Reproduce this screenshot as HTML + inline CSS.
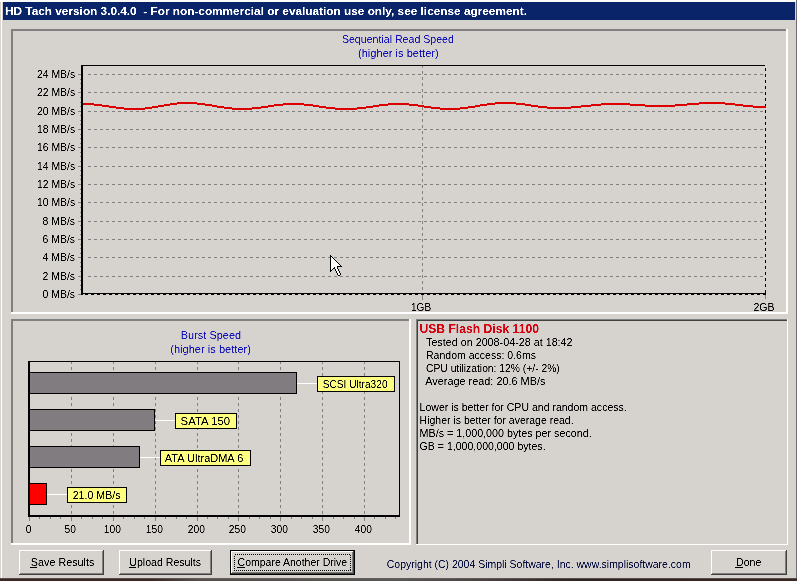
<!DOCTYPE html>
<html><head><meta charset="utf-8"><style>
html,body{margin:0;padding:0;width:797px;height:581px;overflow:hidden;background:#d6d3ce}
svg{display:block;will-change:transform}
text{font-family:"Liberation Sans",sans-serif;white-space:pre}
</style></head><body>
<svg width="797" height="581" viewBox="0 0 797 581" shape-rendering="crispEdges">
<defs><filter id="cr" filterUnits="userSpaceOnUse" x="0" y="0" width="797" height="581" color-interpolation-filters="sRGB"><feComponentTransfer><feFuncA type="linear" slope="2" intercept="-0.45"/></feComponentTransfer></filter></defs>
<rect x="0" y="0" width="797" height="581" fill="#d6d3ce"/>
<rect x="0" y="0" width="797" height="2" fill="#fbfbf8"/>
<rect x="1" y="1" width="1" height="578" fill="#ffffff"/>
<rect x="796" y="0" width="1" height="581" fill="#706c70"/>
<defs><linearGradient id="bt" x1="0" x2="1" y1="0" y2="0"><stop offset="0" stop-color="#3a2622"/><stop offset="0.19" stop-color="#3a2622"/><stop offset="0.25" stop-color="#55504e"/><stop offset="0.5" stop-color="#5a5654"/><stop offset="0.6" stop-color="#4a4442"/><stop offset="0.72" stop-color="#2e2422"/><stop offset="1" stop-color="#3a2622"/></linearGradient></defs>
<rect x="0" y="578" width="797" height="3" fill="url(#bt)"/>
<rect x="0" y="578" width="797" height="1" fill="rgba(110,104,104,0.6)"/>
<rect x="3" y="2" width="792" height="18" fill="#0a246a"/>
<rect x="11" y="29" width="777" height="2" fill="#808080"/>
<rect x="11" y="29" width="2" height="285" fill="#808080"/>
<rect x="11" y="312" width="777" height="2" fill="#ffffff"/>
<rect x="786" y="29" width="2" height="285" fill="#ffffff"/>
<rect x="11" y="319" width="400" height="2" fill="#808080"/>
<rect x="11" y="319" width="2" height="226" fill="#808080"/>
<rect x="11" y="543" width="400" height="2" fill="#ffffff"/>
<rect x="409" y="319" width="2" height="226" fill="#ffffff"/>
<rect x="416" y="319" width="372" height="226" fill="#d6d3ce"/>
<rect x="416" y="319" width="372" height="1" fill="#808080"/>
<rect x="416" y="319" width="1" height="226" fill="#808080"/>
<rect x="417" y="320" width="370" height="1" fill="#404040"/>
<rect x="417" y="320" width="1" height="224" fill="#404040"/>
<rect x="416" y="544" width="372" height="1" fill="#ffffff"/>
<rect x="787" y="319" width="1" height="226" fill="#ffffff"/>
<line x1="88" y1="74.5" x2="765" y2="74.5" stroke="#808080" stroke-width="1" stroke-dasharray="3 3" stroke-dashoffset="0"/>
<rect x="78" y="74" width="3" height="1" fill="#808080"/>
<line x1="88" y1="92.5" x2="765" y2="92.5" stroke="#808080" stroke-width="1" stroke-dasharray="3 3" stroke-dashoffset="0"/>
<rect x="78" y="92" width="3" height="1" fill="#808080"/>
<line x1="88" y1="111.5" x2="765" y2="111.5" stroke="#808080" stroke-width="1" stroke-dasharray="3 3" stroke-dashoffset="0"/>
<rect x="78" y="111" width="3" height="1" fill="#808080"/>
<line x1="88" y1="129.5" x2="765" y2="129.5" stroke="#808080" stroke-width="1" stroke-dasharray="3 3" stroke-dashoffset="0"/>
<rect x="78" y="129" width="3" height="1" fill="#808080"/>
<line x1="88" y1="147.5" x2="765" y2="147.5" stroke="#808080" stroke-width="1" stroke-dasharray="3 3" stroke-dashoffset="0"/>
<rect x="78" y="147" width="3" height="1" fill="#808080"/>
<line x1="88" y1="166.5" x2="765" y2="166.5" stroke="#808080" stroke-width="1" stroke-dasharray="3 3" stroke-dashoffset="0"/>
<rect x="78" y="166" width="3" height="1" fill="#808080"/>
<line x1="88" y1="184.5" x2="765" y2="184.5" stroke="#808080" stroke-width="1" stroke-dasharray="3 3" stroke-dashoffset="0"/>
<rect x="78" y="184" width="3" height="1" fill="#808080"/>
<line x1="88" y1="202.5" x2="765" y2="202.5" stroke="#808080" stroke-width="1" stroke-dasharray="3 3" stroke-dashoffset="0"/>
<rect x="78" y="202" width="3" height="1" fill="#808080"/>
<line x1="88" y1="221.5" x2="765" y2="221.5" stroke="#808080" stroke-width="1" stroke-dasharray="3 3" stroke-dashoffset="0"/>
<rect x="78" y="221" width="3" height="1" fill="#808080"/>
<line x1="88" y1="239.5" x2="765" y2="239.5" stroke="#808080" stroke-width="1" stroke-dasharray="3 3" stroke-dashoffset="0"/>
<rect x="78" y="239" width="3" height="1" fill="#808080"/>
<line x1="88" y1="257.5" x2="765" y2="257.5" stroke="#808080" stroke-width="1" stroke-dasharray="3 3" stroke-dashoffset="0"/>
<rect x="78" y="257" width="3" height="1" fill="#808080"/>
<line x1="88" y1="276.5" x2="765" y2="276.5" stroke="#808080" stroke-width="1" stroke-dasharray="3 3" stroke-dashoffset="0"/>
<rect x="78" y="276" width="3" height="1" fill="#808080"/>
<rect x="78" y="294" width="3" height="1" fill="#808080"/>
<rect x="80" y="74" width="1" height="1" fill="#808080"/>
<rect x="80" y="79" width="1" height="1" fill="#808080"/>
<rect x="80" y="83" width="1" height="1" fill="#808080"/>
<rect x="80" y="88" width="1" height="1" fill="#808080"/>
<rect x="80" y="92" width="1" height="1" fill="#808080"/>
<rect x="80" y="97" width="1" height="1" fill="#808080"/>
<rect x="80" y="102" width="1" height="1" fill="#808080"/>
<rect x="80" y="106" width="1" height="1" fill="#808080"/>
<rect x="80" y="111" width="1" height="1" fill="#808080"/>
<rect x="80" y="115" width="1" height="1" fill="#808080"/>
<rect x="80" y="120" width="1" height="1" fill="#808080"/>
<rect x="80" y="124" width="1" height="1" fill="#808080"/>
<rect x="80" y="129" width="1" height="1" fill="#808080"/>
<rect x="80" y="134" width="1" height="1" fill="#808080"/>
<rect x="80" y="138" width="1" height="1" fill="#808080"/>
<rect x="80" y="143" width="1" height="1" fill="#808080"/>
<rect x="80" y="147" width="1" height="1" fill="#808080"/>
<rect x="80" y="152" width="1" height="1" fill="#808080"/>
<rect x="80" y="156" width="1" height="1" fill="#808080"/>
<rect x="80" y="161" width="1" height="1" fill="#808080"/>
<rect x="80" y="166" width="1" height="1" fill="#808080"/>
<rect x="80" y="170" width="1" height="1" fill="#808080"/>
<rect x="80" y="175" width="1" height="1" fill="#808080"/>
<rect x="80" y="179" width="1" height="1" fill="#808080"/>
<rect x="80" y="184" width="1" height="1" fill="#808080"/>
<rect x="80" y="189" width="1" height="1" fill="#808080"/>
<rect x="80" y="193" width="1" height="1" fill="#808080"/>
<rect x="80" y="198" width="1" height="1" fill="#808080"/>
<rect x="80" y="202" width="1" height="1" fill="#808080"/>
<rect x="80" y="207" width="1" height="1" fill="#808080"/>
<rect x="80" y="212" width="1" height="1" fill="#808080"/>
<rect x="80" y="216" width="1" height="1" fill="#808080"/>
<rect x="80" y="221" width="1" height="1" fill="#808080"/>
<rect x="80" y="225" width="1" height="1" fill="#808080"/>
<rect x="80" y="230" width="1" height="1" fill="#808080"/>
<rect x="80" y="234" width="1" height="1" fill="#808080"/>
<rect x="80" y="239" width="1" height="1" fill="#808080"/>
<rect x="80" y="244" width="1" height="1" fill="#808080"/>
<rect x="80" y="248" width="1" height="1" fill="#808080"/>
<rect x="80" y="253" width="1" height="1" fill="#808080"/>
<rect x="80" y="257" width="1" height="1" fill="#808080"/>
<rect x="80" y="262" width="1" height="1" fill="#808080"/>
<rect x="80" y="266" width="1" height="1" fill="#808080"/>
<rect x="80" y="271" width="1" height="1" fill="#808080"/>
<rect x="80" y="276" width="1" height="1" fill="#808080"/>
<rect x="80" y="280" width="1" height="1" fill="#808080"/>
<rect x="80" y="285" width="1" height="1" fill="#808080"/>
<rect x="80" y="289" width="1" height="1" fill="#808080"/>
<rect x="80" y="294" width="1" height="1" fill="#808080"/>
<line x1="422.5" y1="65" x2="422.5" y2="293" stroke="#808080" stroke-width="1" stroke-dasharray="3 3" stroke-dashoffset="0"/>
<rect x="422" y="294" width="1" height="6" fill="#808080"/>
<rect x="765" y="295" width="1" height="4" fill="#808080"/>
<rect x="81" y="65" width="684" height="1" fill="#000"/>
<rect x="81" y="65" width="2" height="230" fill="#000"/>
<rect x="81" y="293" width="685" height="1" fill="#000"/>
<rect x="85" y="294" width="3" height="1" fill="#000"/>
<rect x="91" y="294" width="3" height="1" fill="#000"/>
<rect x="97" y="294" width="3" height="1" fill="#000"/>
<rect x="103" y="294" width="3" height="1" fill="#000"/>
<rect x="109" y="294" width="3" height="1" fill="#000"/>
<rect x="115" y="294" width="3" height="1" fill="#000"/>
<rect x="121" y="294" width="3" height="1" fill="#000"/>
<rect x="127" y="294" width="3" height="1" fill="#000"/>
<rect x="133" y="294" width="3" height="1" fill="#000"/>
<rect x="139" y="294" width="3" height="1" fill="#000"/>
<rect x="145" y="294" width="3" height="1" fill="#000"/>
<rect x="151" y="294" width="3" height="1" fill="#000"/>
<rect x="157" y="294" width="3" height="1" fill="#000"/>
<rect x="163" y="294" width="3" height="1" fill="#000"/>
<rect x="169" y="294" width="3" height="1" fill="#000"/>
<rect x="175" y="294" width="3" height="1" fill="#000"/>
<rect x="181" y="294" width="3" height="1" fill="#000"/>
<rect x="187" y="294" width="3" height="1" fill="#000"/>
<rect x="193" y="294" width="3" height="1" fill="#000"/>
<rect x="199" y="294" width="3" height="1" fill="#000"/>
<rect x="205" y="294" width="3" height="1" fill="#000"/>
<rect x="211" y="294" width="3" height="1" fill="#000"/>
<rect x="217" y="294" width="3" height="1" fill="#000"/>
<rect x="223" y="294" width="3" height="1" fill="#000"/>
<rect x="229" y="294" width="3" height="1" fill="#000"/>
<rect x="235" y="294" width="3" height="1" fill="#000"/>
<rect x="241" y="294" width="3" height="1" fill="#000"/>
<rect x="247" y="294" width="3" height="1" fill="#000"/>
<rect x="253" y="294" width="3" height="1" fill="#000"/>
<rect x="259" y="294" width="3" height="1" fill="#000"/>
<rect x="265" y="294" width="3" height="1" fill="#000"/>
<rect x="271" y="294" width="3" height="1" fill="#000"/>
<rect x="277" y="294" width="3" height="1" fill="#000"/>
<rect x="283" y="294" width="3" height="1" fill="#000"/>
<rect x="289" y="294" width="3" height="1" fill="#000"/>
<rect x="295" y="294" width="3" height="1" fill="#000"/>
<rect x="301" y="294" width="3" height="1" fill="#000"/>
<rect x="307" y="294" width="3" height="1" fill="#000"/>
<rect x="313" y="294" width="3" height="1" fill="#000"/>
<rect x="319" y="294" width="3" height="1" fill="#000"/>
<rect x="325" y="294" width="3" height="1" fill="#000"/>
<rect x="331" y="294" width="3" height="1" fill="#000"/>
<rect x="337" y="294" width="3" height="1" fill="#000"/>
<rect x="343" y="294" width="3" height="1" fill="#000"/>
<rect x="349" y="294" width="3" height="1" fill="#000"/>
<rect x="355" y="294" width="3" height="1" fill="#000"/>
<rect x="361" y="294" width="3" height="1" fill="#000"/>
<rect x="367" y="294" width="3" height="1" fill="#000"/>
<rect x="373" y="294" width="3" height="1" fill="#000"/>
<rect x="379" y="294" width="3" height="1" fill="#000"/>
<rect x="385" y="294" width="3" height="1" fill="#000"/>
<rect x="391" y="294" width="3" height="1" fill="#000"/>
<rect x="397" y="294" width="3" height="1" fill="#000"/>
<rect x="403" y="294" width="3" height="1" fill="#000"/>
<rect x="409" y="294" width="3" height="1" fill="#000"/>
<rect x="415" y="294" width="3" height="1" fill="#000"/>
<rect x="421" y="294" width="3" height="1" fill="#000"/>
<rect x="427" y="294" width="3" height="1" fill="#000"/>
<rect x="433" y="294" width="3" height="1" fill="#000"/>
<rect x="439" y="294" width="3" height="1" fill="#000"/>
<rect x="445" y="294" width="3" height="1" fill="#000"/>
<rect x="451" y="294" width="3" height="1" fill="#000"/>
<rect x="457" y="294" width="3" height="1" fill="#000"/>
<rect x="463" y="294" width="3" height="1" fill="#000"/>
<rect x="469" y="294" width="3" height="1" fill="#000"/>
<rect x="475" y="294" width="3" height="1" fill="#000"/>
<rect x="481" y="294" width="3" height="1" fill="#000"/>
<rect x="487" y="294" width="3" height="1" fill="#000"/>
<rect x="493" y="294" width="3" height="1" fill="#000"/>
<rect x="499" y="294" width="3" height="1" fill="#000"/>
<rect x="505" y="294" width="3" height="1" fill="#000"/>
<rect x="511" y="294" width="3" height="1" fill="#000"/>
<rect x="517" y="294" width="3" height="1" fill="#000"/>
<rect x="523" y="294" width="3" height="1" fill="#000"/>
<rect x="529" y="294" width="3" height="1" fill="#000"/>
<rect x="535" y="294" width="3" height="1" fill="#000"/>
<rect x="541" y="294" width="3" height="1" fill="#000"/>
<rect x="547" y="294" width="3" height="1" fill="#000"/>
<rect x="553" y="294" width="3" height="1" fill="#000"/>
<rect x="559" y="294" width="3" height="1" fill="#000"/>
<rect x="565" y="294" width="3" height="1" fill="#000"/>
<rect x="571" y="294" width="3" height="1" fill="#000"/>
<rect x="577" y="294" width="3" height="1" fill="#000"/>
<rect x="583" y="294" width="3" height="1" fill="#000"/>
<rect x="589" y="294" width="3" height="1" fill="#000"/>
<rect x="595" y="294" width="3" height="1" fill="#000"/>
<rect x="601" y="294" width="3" height="1" fill="#000"/>
<rect x="607" y="294" width="3" height="1" fill="#000"/>
<rect x="613" y="294" width="3" height="1" fill="#000"/>
<rect x="619" y="294" width="3" height="1" fill="#000"/>
<rect x="625" y="294" width="3" height="1" fill="#000"/>
<rect x="631" y="294" width="3" height="1" fill="#000"/>
<rect x="637" y="294" width="3" height="1" fill="#000"/>
<rect x="643" y="294" width="3" height="1" fill="#000"/>
<rect x="649" y="294" width="3" height="1" fill="#000"/>
<rect x="655" y="294" width="3" height="1" fill="#000"/>
<rect x="661" y="294" width="3" height="1" fill="#000"/>
<rect x="667" y="294" width="3" height="1" fill="#000"/>
<rect x="673" y="294" width="3" height="1" fill="#000"/>
<rect x="679" y="294" width="3" height="1" fill="#000"/>
<rect x="685" y="294" width="3" height="1" fill="#000"/>
<rect x="691" y="294" width="3" height="1" fill="#000"/>
<rect x="697" y="294" width="3" height="1" fill="#000"/>
<rect x="703" y="294" width="3" height="1" fill="#000"/>
<rect x="709" y="294" width="3" height="1" fill="#000"/>
<rect x="715" y="294" width="3" height="1" fill="#000"/>
<rect x="721" y="294" width="3" height="1" fill="#000"/>
<rect x="727" y="294" width="3" height="1" fill="#000"/>
<rect x="733" y="294" width="3" height="1" fill="#000"/>
<rect x="739" y="294" width="3" height="1" fill="#000"/>
<rect x="745" y="294" width="3" height="1" fill="#000"/>
<rect x="751" y="294" width="3" height="1" fill="#000"/>
<rect x="757" y="294" width="3" height="1" fill="#000"/>
<rect x="763" y="294" width="3" height="1" fill="#000"/>
<rect x="765" y="68" width="1" height="3" fill="#000"/>
<rect x="765" y="74" width="1" height="3" fill="#000"/>
<rect x="765" y="80" width="1" height="3" fill="#000"/>
<rect x="765" y="86" width="1" height="3" fill="#000"/>
<rect x="765" y="92" width="1" height="3" fill="#000"/>
<rect x="765" y="98" width="1" height="3" fill="#000"/>
<rect x="765" y="104" width="1" height="3" fill="#000"/>
<rect x="765" y="110" width="1" height="3" fill="#000"/>
<rect x="765" y="116" width="1" height="3" fill="#000"/>
<rect x="765" y="122" width="1" height="3" fill="#000"/>
<rect x="765" y="128" width="1" height="3" fill="#000"/>
<rect x="765" y="134" width="1" height="3" fill="#000"/>
<rect x="765" y="140" width="1" height="3" fill="#000"/>
<rect x="765" y="146" width="1" height="3" fill="#000"/>
<rect x="765" y="152" width="1" height="3" fill="#000"/>
<rect x="765" y="158" width="1" height="3" fill="#000"/>
<rect x="765" y="164" width="1" height="3" fill="#000"/>
<rect x="765" y="170" width="1" height="3" fill="#000"/>
<rect x="765" y="176" width="1" height="3" fill="#000"/>
<rect x="765" y="182" width="1" height="3" fill="#000"/>
<rect x="765" y="188" width="1" height="3" fill="#000"/>
<rect x="765" y="194" width="1" height="3" fill="#000"/>
<rect x="765" y="200" width="1" height="3" fill="#000"/>
<rect x="765" y="206" width="1" height="3" fill="#000"/>
<rect x="765" y="212" width="1" height="3" fill="#000"/>
<rect x="765" y="218" width="1" height="3" fill="#000"/>
<rect x="765" y="224" width="1" height="3" fill="#000"/>
<rect x="765" y="230" width="1" height="3" fill="#000"/>
<rect x="765" y="236" width="1" height="3" fill="#000"/>
<rect x="765" y="242" width="1" height="3" fill="#000"/>
<rect x="765" y="248" width="1" height="3" fill="#000"/>
<rect x="765" y="254" width="1" height="3" fill="#000"/>
<rect x="765" y="260" width="1" height="3" fill="#000"/>
<rect x="765" y="266" width="1" height="3" fill="#000"/>
<rect x="765" y="272" width="1" height="3" fill="#000"/>
<rect x="765" y="278" width="1" height="3" fill="#000"/>
<rect x="765" y="284" width="1" height="3" fill="#000"/>
<rect x="765" y="290" width="1" height="3" fill="#000"/>
<rect x="83" y="103" width="11" height="2" fill="#dd0000"/>
<rect x="94" y="104" width="8" height="2" fill="#dd0000"/>
<rect x="102" y="105" width="7" height="2" fill="#dd0000"/>
<rect x="109" y="106" width="7" height="2" fill="#dd0000"/>
<rect x="116" y="107" width="8" height="2" fill="#dd0000"/>
<rect x="124" y="108" width="21" height="2" fill="#dd0000"/>
<rect x="145" y="107" width="7" height="2" fill="#dd0000"/>
<rect x="152" y="106" width="6" height="2" fill="#dd0000"/>
<rect x="158" y="105" width="6" height="2" fill="#dd0000"/>
<rect x="164" y="104" width="6" height="2" fill="#dd0000"/>
<rect x="170" y="103" width="7" height="2" fill="#dd0000"/>
<rect x="177" y="102" width="20" height="2" fill="#dd0000"/>
<rect x="197" y="103" width="8" height="2" fill="#dd0000"/>
<rect x="205" y="104" width="7" height="2" fill="#dd0000"/>
<rect x="212" y="105" width="5" height="2" fill="#dd0000"/>
<rect x="217" y="106" width="7" height="2" fill="#dd0000"/>
<rect x="224" y="107" width="8" height="2" fill="#dd0000"/>
<rect x="232" y="108" width="20" height="2" fill="#dd0000"/>
<rect x="252" y="107" width="9" height="2" fill="#dd0000"/>
<rect x="261" y="106" width="7" height="2" fill="#dd0000"/>
<rect x="268" y="105" width="6" height="2" fill="#dd0000"/>
<rect x="274" y="104" width="9" height="2" fill="#dd0000"/>
<rect x="283" y="103" width="21" height="2" fill="#dd0000"/>
<rect x="304" y="104" width="9" height="2" fill="#dd0000"/>
<rect x="313" y="105" width="6" height="2" fill="#dd0000"/>
<rect x="319" y="106" width="7" height="2" fill="#dd0000"/>
<rect x="326" y="107" width="9" height="2" fill="#dd0000"/>
<rect x="335" y="108" width="22" height="2" fill="#dd0000"/>
<rect x="357" y="107" width="9" height="2" fill="#dd0000"/>
<rect x="366" y="106" width="7" height="2" fill="#dd0000"/>
<rect x="373" y="105" width="6" height="2" fill="#dd0000"/>
<rect x="379" y="104" width="9" height="2" fill="#dd0000"/>
<rect x="388" y="103" width="21" height="2" fill="#dd0000"/>
<rect x="409" y="104" width="9" height="2" fill="#dd0000"/>
<rect x="418" y="105" width="6" height="2" fill="#dd0000"/>
<rect x="424" y="106" width="7" height="2" fill="#dd0000"/>
<rect x="431" y="107" width="9" height="2" fill="#dd0000"/>
<rect x="440" y="108" width="20" height="2" fill="#dd0000"/>
<rect x="460" y="107" width="8" height="2" fill="#dd0000"/>
<rect x="468" y="106" width="7" height="2" fill="#dd0000"/>
<rect x="475" y="105" width="5" height="2" fill="#dd0000"/>
<rect x="480" y="104" width="7" height="2" fill="#dd0000"/>
<rect x="487" y="103" width="8" height="2" fill="#dd0000"/>
<rect x="495" y="102" width="21" height="2" fill="#dd0000"/>
<rect x="516" y="103" width="9" height="2" fill="#dd0000"/>
<rect x="525" y="104" width="6" height="2" fill="#dd0000"/>
<rect x="531" y="105" width="7" height="2" fill="#dd0000"/>
<rect x="538" y="106" width="9" height="2" fill="#dd0000"/>
<rect x="547" y="107" width="24" height="2" fill="#dd0000"/>
<rect x="571" y="106" width="10" height="2" fill="#dd0000"/>
<rect x="581" y="105" width="10" height="2" fill="#dd0000"/>
<rect x="591" y="104" width="10" height="2" fill="#dd0000"/>
<rect x="601" y="103" width="29" height="2" fill="#dd0000"/>
<rect x="630" y="104" width="15" height="2" fill="#dd0000"/>
<rect x="645" y="105" width="30" height="2" fill="#dd0000"/>
<rect x="675" y="104" width="12" height="2" fill="#dd0000"/>
<rect x="687" y="103" width="12" height="2" fill="#dd0000"/>
<rect x="699" y="102" width="26" height="2" fill="#dd0000"/>
<rect x="725" y="103" width="10" height="2" fill="#dd0000"/>
<rect x="735" y="104" width="8" height="2" fill="#dd0000"/>
<rect x="743" y="105" width="10" height="2" fill="#dd0000"/>
<rect x="753" y="106" width="13" height="2" fill="#dd0000"/>
<rect x="330" y="255" width="1" height="1" fill="#000"/>
<rect x="330" y="256" width="1" height="1" fill="#000"/>
<rect x="331" y="256" width="1" height="1" fill="#000"/>
<rect x="330" y="257" width="1" height="1" fill="#000"/>
<rect x="331" y="257" width="1" height="1" fill="#fff"/>
<rect x="332" y="257" width="1" height="1" fill="#000"/>
<rect x="330" y="258" width="1" height="1" fill="#000"/>
<rect x="331" y="258" width="1" height="1" fill="#fff"/>
<rect x="332" y="258" width="1" height="1" fill="#fff"/>
<rect x="333" y="258" width="1" height="1" fill="#000"/>
<rect x="330" y="259" width="1" height="1" fill="#000"/>
<rect x="331" y="259" width="1" height="1" fill="#fff"/>
<rect x="332" y="259" width="1" height="1" fill="#fff"/>
<rect x="333" y="259" width="1" height="1" fill="#fff"/>
<rect x="334" y="259" width="1" height="1" fill="#000"/>
<rect x="330" y="260" width="1" height="1" fill="#000"/>
<rect x="331" y="260" width="1" height="1" fill="#fff"/>
<rect x="332" y="260" width="1" height="1" fill="#fff"/>
<rect x="333" y="260" width="1" height="1" fill="#fff"/>
<rect x="334" y="260" width="1" height="1" fill="#fff"/>
<rect x="335" y="260" width="1" height="1" fill="#000"/>
<rect x="330" y="261" width="1" height="1" fill="#000"/>
<rect x="331" y="261" width="1" height="1" fill="#fff"/>
<rect x="332" y="261" width="1" height="1" fill="#fff"/>
<rect x="333" y="261" width="1" height="1" fill="#fff"/>
<rect x="334" y="261" width="1" height="1" fill="#fff"/>
<rect x="335" y="261" width="1" height="1" fill="#fff"/>
<rect x="336" y="261" width="1" height="1" fill="#000"/>
<rect x="330" y="262" width="1" height="1" fill="#000"/>
<rect x="331" y="262" width="1" height="1" fill="#fff"/>
<rect x="332" y="262" width="1" height="1" fill="#fff"/>
<rect x="333" y="262" width="1" height="1" fill="#fff"/>
<rect x="334" y="262" width="1" height="1" fill="#fff"/>
<rect x="335" y="262" width="1" height="1" fill="#fff"/>
<rect x="336" y="262" width="1" height="1" fill="#fff"/>
<rect x="337" y="262" width="1" height="1" fill="#000"/>
<rect x="330" y="263" width="1" height="1" fill="#000"/>
<rect x="331" y="263" width="1" height="1" fill="#fff"/>
<rect x="332" y="263" width="1" height="1" fill="#fff"/>
<rect x="333" y="263" width="1" height="1" fill="#fff"/>
<rect x="334" y="263" width="1" height="1" fill="#fff"/>
<rect x="335" y="263" width="1" height="1" fill="#fff"/>
<rect x="336" y="263" width="1" height="1" fill="#fff"/>
<rect x="337" y="263" width="1" height="1" fill="#fff"/>
<rect x="338" y="263" width="1" height="1" fill="#000"/>
<rect x="330" y="264" width="1" height="1" fill="#000"/>
<rect x="331" y="264" width="1" height="1" fill="#fff"/>
<rect x="332" y="264" width="1" height="1" fill="#fff"/>
<rect x="333" y="264" width="1" height="1" fill="#fff"/>
<rect x="334" y="264" width="1" height="1" fill="#fff"/>
<rect x="335" y="264" width="1" height="1" fill="#fff"/>
<rect x="336" y="264" width="1" height="1" fill="#fff"/>
<rect x="337" y="264" width="1" height="1" fill="#fff"/>
<rect x="338" y="264" width="1" height="1" fill="#fff"/>
<rect x="339" y="264" width="1" height="1" fill="#000"/>
<rect x="330" y="265" width="1" height="1" fill="#000"/>
<rect x="331" y="265" width="1" height="1" fill="#fff"/>
<rect x="332" y="265" width="1" height="1" fill="#fff"/>
<rect x="333" y="265" width="1" height="1" fill="#fff"/>
<rect x="334" y="265" width="1" height="1" fill="#fff"/>
<rect x="335" y="265" width="1" height="1" fill="#fff"/>
<rect x="336" y="265" width="1" height="1" fill="#fff"/>
<rect x="337" y="265" width="1" height="1" fill="#fff"/>
<rect x="338" y="265" width="1" height="1" fill="#fff"/>
<rect x="339" y="265" width="1" height="1" fill="#fff"/>
<rect x="340" y="265" width="1" height="1" fill="#000"/>
<rect x="330" y="266" width="1" height="1" fill="#000"/>
<rect x="331" y="266" width="1" height="1" fill="#fff"/>
<rect x="332" y="266" width="1" height="1" fill="#fff"/>
<rect x="333" y="266" width="1" height="1" fill="#fff"/>
<rect x="334" y="266" width="1" height="1" fill="#fff"/>
<rect x="335" y="266" width="1" height="1" fill="#fff"/>
<rect x="336" y="266" width="1" height="1" fill="#fff"/>
<rect x="337" y="266" width="1" height="1" fill="#000"/>
<rect x="338" y="266" width="1" height="1" fill="#000"/>
<rect x="339" y="266" width="1" height="1" fill="#000"/>
<rect x="340" y="266" width="1" height="1" fill="#000"/>
<rect x="341" y="266" width="1" height="1" fill="#000"/>
<rect x="330" y="267" width="1" height="1" fill="#000"/>
<rect x="331" y="267" width="1" height="1" fill="#fff"/>
<rect x="332" y="267" width="1" height="1" fill="#fff"/>
<rect x="333" y="267" width="1" height="1" fill="#fff"/>
<rect x="334" y="267" width="1" height="1" fill="#000"/>
<rect x="335" y="267" width="1" height="1" fill="#fff"/>
<rect x="336" y="267" width="1" height="1" fill="#fff"/>
<rect x="337" y="267" width="1" height="1" fill="#000"/>
<rect x="330" y="268" width="1" height="1" fill="#000"/>
<rect x="331" y="268" width="1" height="1" fill="#fff"/>
<rect x="332" y="268" width="1" height="1" fill="#fff"/>
<rect x="333" y="268" width="1" height="1" fill="#000"/>
<rect x="334" y="268" width="1" height="1" fill="#000"/>
<rect x="335" y="268" width="1" height="1" fill="#fff"/>
<rect x="336" y="268" width="1" height="1" fill="#fff"/>
<rect x="337" y="268" width="1" height="1" fill="#000"/>
<rect x="330" y="269" width="1" height="1" fill="#000"/>
<rect x="331" y="269" width="1" height="1" fill="#fff"/>
<rect x="332" y="269" width="1" height="1" fill="#000"/>
<rect x="335" y="269" width="1" height="1" fill="#000"/>
<rect x="336" y="269" width="1" height="1" fill="#fff"/>
<rect x="337" y="269" width="1" height="1" fill="#fff"/>
<rect x="338" y="269" width="1" height="1" fill="#000"/>
<rect x="330" y="270" width="1" height="1" fill="#000"/>
<rect x="331" y="270" width="1" height="1" fill="#000"/>
<rect x="335" y="270" width="1" height="1" fill="#000"/>
<rect x="336" y="270" width="1" height="1" fill="#fff"/>
<rect x="337" y="270" width="1" height="1" fill="#fff"/>
<rect x="338" y="270" width="1" height="1" fill="#000"/>
<rect x="330" y="271" width="1" height="1" fill="#000"/>
<rect x="336" y="271" width="1" height="1" fill="#000"/>
<rect x="337" y="271" width="1" height="1" fill="#fff"/>
<rect x="338" y="271" width="1" height="1" fill="#fff"/>
<rect x="339" y="271" width="1" height="1" fill="#000"/>
<rect x="336" y="272" width="1" height="1" fill="#000"/>
<rect x="337" y="272" width="1" height="1" fill="#fff"/>
<rect x="338" y="272" width="1" height="1" fill="#fff"/>
<rect x="339" y="272" width="1" height="1" fill="#000"/>
<rect x="337" y="273" width="1" height="1" fill="#000"/>
<rect x="338" y="273" width="1" height="1" fill="#fff"/>
<rect x="339" y="273" width="1" height="1" fill="#fff"/>
<rect x="340" y="273" width="1" height="1" fill="#000"/>
<rect x="337" y="274" width="1" height="1" fill="#000"/>
<rect x="338" y="274" width="1" height="1" fill="#fff"/>
<rect x="339" y="274" width="1" height="1" fill="#fff"/>
<rect x="340" y="274" width="1" height="1" fill="#000"/>
<rect x="338" y="275" width="1" height="1" fill="#000"/>
<rect x="339" y="275" width="1" height="1" fill="#000"/>
<line x1="71.5" y1="361" x2="71.5" y2="515" stroke="#808080" stroke-width="1" stroke-dasharray="3 3" stroke-dashoffset="0"/>
<line x1="113.5" y1="361" x2="113.5" y2="515" stroke="#808080" stroke-width="1" stroke-dasharray="3 3" stroke-dashoffset="0"/>
<line x1="155.5" y1="361" x2="155.5" y2="515" stroke="#808080" stroke-width="1" stroke-dasharray="3 3" stroke-dashoffset="0"/>
<line x1="197.5" y1="361" x2="197.5" y2="515" stroke="#808080" stroke-width="1" stroke-dasharray="3 3" stroke-dashoffset="0"/>
<line x1="238.5" y1="361" x2="238.5" y2="515" stroke="#808080" stroke-width="1" stroke-dasharray="3 3" stroke-dashoffset="0"/>
<line x1="280.5" y1="361" x2="280.5" y2="515" stroke="#808080" stroke-width="1" stroke-dasharray="3 3" stroke-dashoffset="0"/>
<line x1="322.5" y1="361" x2="322.5" y2="515" stroke="#808080" stroke-width="1" stroke-dasharray="3 3" stroke-dashoffset="0"/>
<line x1="364.5" y1="361" x2="364.5" y2="515" stroke="#808080" stroke-width="1" stroke-dasharray="3 3" stroke-dashoffset="0"/>
<rect x="29" y="517" width="1" height="4" fill="#808080"/>
<rect x="71" y="517" width="1" height="4" fill="#808080"/>
<rect x="113" y="517" width="1" height="4" fill="#808080"/>
<rect x="155" y="517" width="1" height="4" fill="#808080"/>
<rect x="197" y="517" width="1" height="4" fill="#808080"/>
<rect x="238" y="517" width="1" height="4" fill="#808080"/>
<rect x="280" y="517" width="1" height="4" fill="#808080"/>
<rect x="322" y="517" width="1" height="4" fill="#808080"/>
<rect x="364" y="517" width="1" height="4" fill="#808080"/>
<rect x="29" y="517" width="1" height="2" fill="#808080"/>
<rect x="39" y="517" width="1" height="2" fill="#808080"/>
<rect x="50" y="517" width="1" height="2" fill="#808080"/>
<rect x="60" y="517" width="1" height="2" fill="#808080"/>
<rect x="71" y="517" width="1" height="2" fill="#808080"/>
<rect x="81" y="517" width="1" height="2" fill="#808080"/>
<rect x="92" y="517" width="1" height="2" fill="#808080"/>
<rect x="102" y="517" width="1" height="2" fill="#808080"/>
<rect x="113" y="517" width="1" height="2" fill="#808080"/>
<rect x="123" y="517" width="1" height="2" fill="#808080"/>
<rect x="134" y="517" width="1" height="2" fill="#808080"/>
<rect x="144" y="517" width="1" height="2" fill="#808080"/>
<rect x="155" y="517" width="1" height="2" fill="#808080"/>
<rect x="165" y="517" width="1" height="2" fill="#808080"/>
<rect x="176" y="517" width="1" height="2" fill="#808080"/>
<rect x="186" y="517" width="1" height="2" fill="#808080"/>
<rect x="197" y="517" width="1" height="2" fill="#808080"/>
<rect x="207" y="517" width="1" height="2" fill="#808080"/>
<rect x="217" y="517" width="1" height="2" fill="#808080"/>
<rect x="228" y="517" width="1" height="2" fill="#808080"/>
<rect x="238" y="517" width="1" height="2" fill="#808080"/>
<rect x="249" y="517" width="1" height="2" fill="#808080"/>
<rect x="259" y="517" width="1" height="2" fill="#808080"/>
<rect x="270" y="517" width="1" height="2" fill="#808080"/>
<rect x="280" y="517" width="1" height="2" fill="#808080"/>
<rect x="291" y="517" width="1" height="2" fill="#808080"/>
<rect x="301" y="517" width="1" height="2" fill="#808080"/>
<rect x="312" y="517" width="1" height="2" fill="#808080"/>
<rect x="322" y="517" width="1" height="2" fill="#808080"/>
<rect x="333" y="517" width="1" height="2" fill="#808080"/>
<rect x="343" y="517" width="1" height="2" fill="#808080"/>
<rect x="354" y="517" width="1" height="2" fill="#808080"/>
<rect x="364" y="517" width="1" height="2" fill="#808080"/>
<rect x="374" y="517" width="1" height="2" fill="#808080"/>
<rect x="385" y="517" width="1" height="2" fill="#808080"/>
<rect x="395" y="517" width="1" height="2" fill="#808080"/>
<rect x="28" y="361" width="372" height="1" fill="#000"/>
<rect x="28" y="361" width="2" height="156" fill="#000"/>
<rect x="28" y="515" width="372" height="2" fill="#000"/>
<rect x="399" y="361" width="1" height="156" fill="#000"/>
<rect x="30" y="372" width="267" height="22" fill="#000"/>
<rect x="30" y="373" width="266" height="20" fill="#807c80"/>
<rect x="297" y="383" width="20" height="1" fill="#ffffff"/>
<rect x="317" y="376" width="78" height="16" fill="#000"/>
<rect x="318" y="377" width="76" height="14" fill="#ffff80"/>
<rect x="30" y="409" width="125" height="22" fill="#000"/>
<rect x="30" y="410" width="124" height="20" fill="#807c80"/>
<rect x="155" y="420" width="20" height="1" fill="#ffffff"/>
<rect x="175" y="413" width="62" height="16" fill="#000"/>
<rect x="176" y="414" width="60" height="14" fill="#ffff80"/>
<rect x="30" y="446" width="110" height="22" fill="#000"/>
<rect x="30" y="447" width="109" height="20" fill="#807c80"/>
<rect x="140" y="457" width="20" height="1" fill="#ffffff"/>
<rect x="160" y="450" width="91" height="16" fill="#000"/>
<rect x="161" y="451" width="89" height="14" fill="#ffff80"/>
<rect x="30" y="483" width="17" height="22" fill="#000"/>
<rect x="30" y="484" width="16" height="20" fill="#ff0000"/>
<rect x="47" y="494" width="20" height="1" fill="#ffffff"/>
<rect x="67" y="487" width="60" height="16" fill="#000"/>
<rect x="68" y="488" width="58" height="14" fill="#ffff80"/>
<rect x="19" y="550" width="85" height="25" fill="#404040"/>
<rect x="19" y="550" width="84" height="24" fill="#ffffff"/>
<rect x="20" y="551" width="83" height="23" fill="#808080"/>
<rect x="20" y="551" width="82" height="22" fill="#d6d3ce"/>
<rect x="30" y="567" width="7" height="1" fill="#000"/>
<rect x="119" y="550" width="93" height="25" fill="#404040"/>
<rect x="119" y="550" width="92" height="24" fill="#ffffff"/>
<rect x="120" y="551" width="91" height="23" fill="#808080"/>
<rect x="120" y="551" width="90" height="22" fill="#d6d3ce"/>
<rect x="129" y="567" width="7" height="1" fill="#000"/>
<rect x="230" y="550" width="125" height="25" fill="#000"/>
<rect x="231" y="551" width="123" height="23" fill="#404040"/>
<rect x="231" y="551" width="122" height="22" fill="#ffffff"/>
<rect x="232" y="552" width="121" height="21" fill="#808080"/>
<rect x="232" y="552" width="120" height="20" fill="#d6d3ce"/>
<rect x="237" y="567" width="8" height="1" fill="#000"/>
<rect x="234.5" y="554.5" width="116" height="16" fill="none" stroke="#000" stroke-width="1" stroke-dasharray="1 1"/>
<rect x="711" y="550" width="76" height="25" fill="#404040"/>
<rect x="711" y="550" width="75" height="24" fill="#ffffff"/>
<rect x="712" y="551" width="74" height="23" fill="#808080"/>
<rect x="712" y="551" width="73" height="22" fill="#d6d3ce"/>
<rect x="735" y="567" width="8" height="1" fill="#000"/>
<g filter="url(#cr)">
<text x="5.00" y="15" font-size="11.5" fill="#fff" font-weight="bold" textLength="521.92" lengthAdjust="spacingAndGlyphs">HD Tach version 3.0.4.0&#160; - For non-commercial or evaluation use only, see license agreement.</text>
<text x="341.90" y="43" font-size="11.2" fill="#1414b8" textLength="111.98" lengthAdjust="spacingAndGlyphs">Sequential Read Speed</text>
<text x="358.00" y="57" font-size="11.2" fill="#1414b8" textLength="80.76" lengthAdjust="spacingAndGlyphs">(higher is better)</text>
<text x="36.90" y="78" font-size="11.2" fill="#000" textLength="38.34" lengthAdjust="spacingAndGlyphs">24 MB/s</text>
<text x="36.90" y="96" font-size="11.2" fill="#000" textLength="38.34" lengthAdjust="spacingAndGlyphs">22 MB/s</text>
<text x="36.90" y="115" font-size="11.2" fill="#000" textLength="38.34" lengthAdjust="spacingAndGlyphs">20 MB/s</text>
<text x="36.90" y="133" font-size="11.2" fill="#000" textLength="38.34" lengthAdjust="spacingAndGlyphs">18 MB/s</text>
<text x="36.90" y="151" font-size="11.2" fill="#000" textLength="38.34" lengthAdjust="spacingAndGlyphs">16 MB/s</text>
<text x="36.90" y="170" font-size="11.2" fill="#000" textLength="38.34" lengthAdjust="spacingAndGlyphs">14 MB/s</text>
<text x="36.90" y="188" font-size="11.2" fill="#000" textLength="38.34" lengthAdjust="spacingAndGlyphs">12 MB/s</text>
<text x="36.90" y="206" font-size="11.2" fill="#000" textLength="38.34" lengthAdjust="spacingAndGlyphs">10 MB/s</text>
<text x="42.50" y="225" font-size="11.2" fill="#000" textLength="32.53" lengthAdjust="spacingAndGlyphs">8 MB/s</text>
<text x="42.50" y="243" font-size="11.2" fill="#000" textLength="32.53" lengthAdjust="spacingAndGlyphs">6 MB/s</text>
<text x="42.50" y="261" font-size="11.2" fill="#000" textLength="32.53" lengthAdjust="spacingAndGlyphs">4 MB/s</text>
<text x="42.50" y="280" font-size="11.2" fill="#000" textLength="32.53" lengthAdjust="spacingAndGlyphs">2 MB/s</text>
<text x="42.50" y="298" font-size="11.2" fill="#000" textLength="32.53" lengthAdjust="spacingAndGlyphs">0 MB/s</text>
<text x="411.00" y="311" font-size="11.2" fill="#000" textLength="20.15" lengthAdjust="spacingAndGlyphs">1GB</text>
<text x="753.50" y="311" font-size="11.2" fill="#000" textLength="21.07" lengthAdjust="spacingAndGlyphs">2GB</text>
<text x="180.80" y="339" font-size="11.2" fill="#1414b8" textLength="60.27" lengthAdjust="spacingAndGlyphs">Burst Speed</text>
<text x="170.20" y="353" font-size="11.2" fill="#1414b8" textLength="80.76" lengthAdjust="spacingAndGlyphs">(higher is better)</text>
<text x="25.75" y="533" font-size="11.2" fill="#000" textLength="5.71" lengthAdjust="spacingAndGlyphs">0</text>
<text x="64.55" y="533" font-size="11.2" fill="#000" textLength="11.40" lengthAdjust="spacingAndGlyphs">50</text>
<text x="103.80" y="533" font-size="11.2" fill="#000" textLength="17.10" lengthAdjust="spacingAndGlyphs">100</text>
<text x="145.80" y="533" font-size="11.2" fill="#000" textLength="17.10" lengthAdjust="spacingAndGlyphs">150</text>
<text x="187.80" y="533" font-size="11.2" fill="#000" textLength="17.10" lengthAdjust="spacingAndGlyphs">200</text>
<text x="228.80" y="533" font-size="11.2" fill="#000" textLength="17.10" lengthAdjust="spacingAndGlyphs">250</text>
<text x="270.80" y="533" font-size="11.2" fill="#000" textLength="17.10" lengthAdjust="spacingAndGlyphs">300</text>
<text x="312.80" y="533" font-size="11.2" fill="#000" textLength="17.10" lengthAdjust="spacingAndGlyphs">350</text>
<text x="354.80" y="533" font-size="11.2" fill="#000" textLength="17.10" lengthAdjust="spacingAndGlyphs">400</text>
<text x="322.70" y="388" font-size="11.2" fill="#000" textLength="64.86" lengthAdjust="spacingAndGlyphs">SCSI Ultra320</text>
<text x="180.60" y="425" font-size="11.2" fill="#000" textLength="49.51" lengthAdjust="spacingAndGlyphs">SATA 150</text>
<text x="164.80" y="462" font-size="11.2" fill="#000" textLength="78.48" lengthAdjust="spacingAndGlyphs">ATA UltraDMA 6</text>
<text x="72.70" y="499" font-size="11.2" fill="#000" textLength="47.86" lengthAdjust="spacingAndGlyphs">21.0 MB/s</text>
<text x="419.40" y="333" font-size="12.6" fill="#d40010" font-weight="bold" textLength="119.61" lengthAdjust="spacingAndGlyphs">USB Flash Disk 1100</text>
<text x="426.00" y="346" font-size="11.2" fill="#000" textLength="146.58" lengthAdjust="spacingAndGlyphs">Tested on 2008-04-28 at 18:42</text>
<text x="426.00" y="359" font-size="11.2" fill="#000" textLength="109.91" lengthAdjust="spacingAndGlyphs">Random access: 0.6ms</text>
<text x="426.00" y="372" font-size="11.2" fill="#000" textLength="133.77" lengthAdjust="spacingAndGlyphs">CPU utilization: 12% (+/- 2%)</text>
<text x="425.30" y="385" font-size="11.2" fill="#000" textLength="120.07" lengthAdjust="spacingAndGlyphs">Average read: 20.6 MB/s</text>
<text x="419.60" y="411" font-size="11.2" fill="#000" textLength="207.12" lengthAdjust="spacingAndGlyphs">Lower is better for CPU and random access.</text>
<text x="419.60" y="424" font-size="11.2" fill="#000" textLength="153.96" lengthAdjust="spacingAndGlyphs">Higher is better for average read.</text>
<text x="419.60" y="437" font-size="11.2" fill="#000" textLength="172.10" lengthAdjust="spacingAndGlyphs">MB/s = 1,000,000 bytes per second.</text>
<text x="419.60" y="450" font-size="11.2" fill="#000" textLength="126.00" lengthAdjust="spacingAndGlyphs">GB = 1,000,000,000 bytes.</text>
<text x="30.80" y="566" font-size="11.8" fill="#000" textLength="63.57" lengthAdjust="spacingAndGlyphs">Save Results</text>
<text x="129.30" y="566" font-size="11.8" fill="#000" textLength="71.80" lengthAdjust="spacingAndGlyphs">Upload Results</text>
<text x="237.60" y="566" font-size="11.8" fill="#000" textLength="109.55" lengthAdjust="spacingAndGlyphs">Compare Another Drive</text>
<text x="736.00" y="566" font-size="11.8" fill="#000" textLength="25.28" lengthAdjust="spacingAndGlyphs">Done</text>
<text x="386.80" y="568" font-size="11.2" fill="#0a1040" textLength="303.81" lengthAdjust="spacingAndGlyphs">Copyright (C) 2004 Simpli Software, Inc. www.simplisoftware.com</text>
</g>
</svg>
</body></html>
